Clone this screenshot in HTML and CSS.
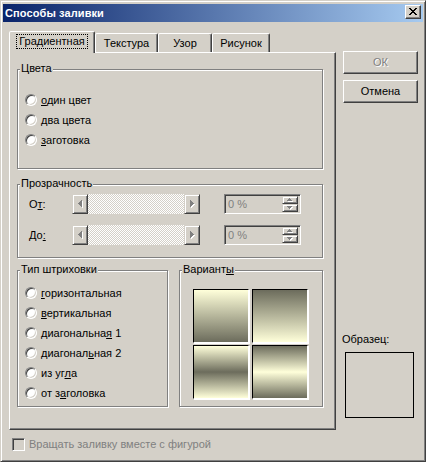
FILE: index.html
```html
<!DOCTYPE html>
<html lang="ru">
<head>
<meta charset="utf-8">
<title>Способы заливки</title>
<link rel="stylesheet" href="styles.css">
</head>
<body>
<div class="window">
  <div class="titlebar">
    <span class="title">Способы заливки</span>
    <span class="close-btn">
      <svg class="close-x" width="8" height="7" viewBox="0 0 8 7" shape-rendering="crispEdges">
        <rect x="0" y="0" width="2" height="1"/><rect x="6" y="0" width="2" height="1"/>
        <rect x="1" y="1" width="2" height="1"/><rect x="5" y="1" width="2" height="1"/>
        <rect x="2" y="2" width="4" height="1"/>
        <rect x="3" y="3" width="2" height="1"/>
        <rect x="2" y="4" width="4" height="1"/>
        <rect x="1" y="5" width="2" height="1"/><rect x="5" y="5" width="2" height="1"/>
        <rect x="0" y="6" width="2" height="1"/><rect x="6" y="6" width="2" height="1"/>
      </svg>
    </span>
  </div>

  <div class="content">
    <div class="leftcol">
      <div class="tabs">
        <div class="tab tab-active tab-grad"><span class="focus">Градиентная</span></div>
        <div class="tab tab-tex">Текстура</div>
        <div class="tab tab-pat">Узор</div>
        <div class="tab tab-pic">Рисунок</div>
      </div>

      <div class="panel">
        <div class="group group-colors">
          <span class="legend">Цвета</span>
          <div class="radio-row"><span class="radio"></span><span><u>о</u>дин цвет</span></div>
          <div class="radio-row"><span class="radio"></span><span><u>д</u>ва цвета</span></div>
          <div class="radio-row"><span class="radio"></span><span><u>з</u>аготовка</span></div>
        </div>

        <div class="group group-transp">
          <span class="legend">Прозрачность</span>
          <div class="slider-row">
            <span class="slider-label">О<u>т</u>:</span>
            <div class="scrollbar">
              <span class="sb-btn">
                <svg width="5" height="8" viewBox="0 0 5 8" shape-rendering="crispEdges">
                  <path class="arr-shadow" d="M1 4h1v-1h1v-1h1v-1h1v7h-1v-1h-1v-1h-1v-1h-1z"/>
                  <path class="arr" d="M0 3h1v-1h1v-1h1v-1h1v7h-1v-1h-1v-1h-1v-1h-1z"/>
                </svg>
              </span>
              <span class="sb-track"></span>
              <span class="sb-btn">
                <svg width="5" height="8" viewBox="0 0 5 8" shape-rendering="crispEdges">
                  <path class="arr-shadow" d="M1 1h1v1h1v1h1v1h1v1h-1v1h-1v1h-1v1h-1z"/>
                  <path class="arr" d="M0 0h1v1h1v1h1v1h1v1h-1v1h-1v1h-1v1h-1z"/>
                </svg>
              </span>
            </div>
            <div class="spin">
              <span class="spin-text">0 %</span>
              <div class="spin-btns">
                <span class="spin-btn">
                  <svg width="6" height="4" viewBox="0 0 6 4" shape-rendering="crispEdges">
                    <path class="arr-shadow" d="M3 1h1v1h1v1h1v1h-5v-1h1v-1h1z"/>
                    <path class="arr" d="M2 0h1v1h1v1h1v1h-5v-1h1v-1h1z"/>
                  </svg>
                </span>
                <span class="spin-btn">
                  <svg width="6" height="4" viewBox="0 0 6 4" shape-rendering="crispEdges">
                    <path class="arr-shadow" d="M1 1h5v1h-1v1h-1v1h-1v-1h-1v-1h-1z"/>
                    <path class="arr" d="M0 0h5v1h-1v1h-1v1h-1v-1h-1v-1h-1z"/>
                  </svg>
                </span>
              </div>
            </div>
          </div>
          <div class="slider-row slider-row-2">
            <span class="slider-label">До<u>:</u></span>
            <div class="scrollbar">
              <span class="sb-btn">
                <svg width="5" height="8" viewBox="0 0 5 8" shape-rendering="crispEdges">
                  <path class="arr-shadow" d="M1 4h1v-1h1v-1h1v-1h1v7h-1v-1h-1v-1h-1v-1h-1z"/>
                  <path class="arr" d="M0 3h1v-1h1v-1h1v-1h1v7h-1v-1h-1v-1h-1v-1h-1z"/>
                </svg>
              </span>
              <span class="sb-track"></span>
              <span class="sb-btn">
                <svg width="5" height="8" viewBox="0 0 5 8" shape-rendering="crispEdges">
                  <path class="arr-shadow" d="M1 1h1v1h1v1h1v1h1v1h-1v1h-1v1h-1v1h-1z"/>
                  <path class="arr" d="M0 0h1v1h1v1h1v1h1v1h-1v1h-1v1h-1v1h-1z"/>
                </svg>
              </span>
            </div>
            <div class="spin">
              <span class="spin-text">0 %</span>
              <div class="spin-btns">
                <span class="spin-btn">
                  <svg width="6" height="4" viewBox="0 0 6 4" shape-rendering="crispEdges">
                    <path class="arr-shadow" d="M3 1h1v1h1v1h1v1h-5v-1h1v-1h1z"/>
                    <path class="arr" d="M2 0h1v1h1v1h1v1h-5v-1h1v-1h1z"/>
                  </svg>
                </span>
                <span class="spin-btn">
                  <svg width="6" height="4" viewBox="0 0 6 4" shape-rendering="crispEdges">
                    <path class="arr-shadow" d="M1 1h5v1h-1v1h-1v1h-1v-1h-1v-1h-1z"/>
                    <path class="arr" d="M0 0h5v1h-1v1h-1v1h-1v-1h-1v-1h-1z"/>
                  </svg>
                </span>
              </div>
            </div>
          </div>
        </div>

        <div class="bottom-groups">
          <div class="group group-hatch">
            <span class="legend">Тип штриховки</span>
            <div class="radio-row"><span class="radio"></span><span><u>г</u>оризонтальная</span></div>
            <div class="radio-row"><span class="radio"></span><span><u>в</u>ертикальная</span></div>
            <div class="radio-row"><span class="radio"></span><span>диагональна<u>я</u> 1</span></div>
            <div class="radio-row"><span class="radio"></span><span>диагонал<u>ь</u>ная 2</span></div>
            <div class="radio-row"><span class="radio"></span><span>из уг<u>л</u>а</span></div>
            <div class="radio-row"><span class="radio"></span><span>от з<u>а</u>головка</span></div>
          </div>
          <div class="group group-variants">
            <span class="legend">Вариант<u>ы</u></span>
            <div class="swatches">
              <span class="swatch sw-down"></span>
              <span class="swatch sw-up"></span>
              <span class="swatch sw-mid-dark"></span>
              <span class="swatch sw-mid-light"></span>
            </div>
          </div>
        </div>
      </div>

      <div class="check-row">
        <span class="checkbox"></span>
        <span class="check-label">Вращать заливку вместе с фигурой</span>
      </div>
    </div>

    <div class="rightcol">
      <div class="btn btn-ok btn-disabled">ОК</div>
      <div class="btn">Отмена</div>
      <div class="sample-label">Образец:</div>
      <div class="sample-box"></div>
    </div>
  </div>
</div>
</body>
</html>
```

FILE: styles.css
```css
html, body {
  margin: 0;
  padding: 0;
  background: #D4D0C8;
}

body {
  font-family: "Liberation Sans", Arial, sans-serif;
  font-size: 11px;
  line-height: 13px;
  color: #000;
}

u {
  text-decoration: underline;
  text-underline-offset: 1px;
}

.window {
  box-sizing: border-box;
  width: 426px;
  height: 462px;
  background: #D4D0C8;
  border: 1px solid;
  border-color: #D4D0C8 #404040 #404040 #D4D0C8;
  box-shadow: inset 1px 1px 0 #fff, inset -1px -1px 0 #808080;
  padding: 3px 2px 2px 2px;
  display: flex;
  flex-direction: column;
}

/* ---------- title bar ---------- */
.titlebar {
  height: 18px;
  flex: none;
  background: linear-gradient(to right, #0A246A, #A6CAF0);
  display: flex;
  align-items: center;
  justify-content: space-between;
  padding: 0 2px 0 2px;
}

.title {
  color: #fff;
  font-weight: bold;
  font-size: 11px;
  letter-spacing: 0.1px;
}

.close-btn {
  align-self: flex-start;
  margin-top: 1px;
  box-sizing: border-box;
  width: 16px;
  height: 14px;
  background: #D4D0C8;
  border: 1px solid;
  border-color: #fff #404040 #404040 #fff;
  box-shadow: inset -1px -1px 0 #808080;
  display: flex;
  align-items: center;
  justify-content: center;
  padding: 0 1px 1px 0;
}

.close-x {
  display: block;
  fill: #000;
}

/* ---------- content ---------- */
.content {
  display: flex;
  padding: 9px 0 0 6px;
}

.leftcol {
  width: 327px;
  display: flex;
  flex-direction: column;
}

/* tabs */
.tabs {
  display: flex;
  align-items: flex-end;
  height: 21px;
}

.tab {
  box-sizing: border-box;
  height: 19px;
  border: 1px solid;
  border-bottom: none;
  border-color: #fff #404040 transparent #fff;
  border-radius: 2px 2px 0 0;
  box-shadow: inset -1px 0 0 #808080;
  background: #D4D0C8;
  display: flex;
  align-items: center;
  justify-content: center;
  padding-top: 1px;
}

.tab-active {
  position: relative;
  z-index: 1;
  height: 22px;
  margin-bottom: -1px;
  padding-top: 0;
  padding-bottom: 2px;
}

.tab-grad { width: 86px; }
.tab-tex { width: 63px; }
.tab-pat { width: 54px; }
.tab-pic { width: 58px; }

.focus {
  outline: 1px dotted #000;
  outline-offset: 0;
  padding: 0 2px;
}

/* panel */
.panel {
  box-sizing: border-box;
  width: 327px;
  height: 378px;
  border: 1px solid;
  border-color: #fff #404040 #404040 #fff;
  box-shadow: inset -1px -1px 0 #808080;
  padding: 16px 0 0 7px;
}

.group {
  position: relative;
  box-sizing: border-box;
  border: 1px solid #808080;
  box-shadow: 1px 1px 0 #fff, inset 1px 1px 0 #fff;
}

.legend {
  position: absolute;
  top: -8px;
  left: 2px;
  padding: 0 1px;
  background: #D4D0C8;
  line-height: 13px;
  white-space: nowrap;
}

.group-colors {
  width: 306px;
  height: 100px;
  padding: 20px 0 0 7px;
}

.group-transp {
  width: 306px;
  height: 74px;
  margin-top: 15px;
  padding: 9px 0 0 11px;
}

.bottom-groups {
  display: flex;
  gap: 11px;
  margin-top: 12px;
}

.group-hatch {
  width: 151px;
  height: 137px;
  padding: 12px 0 0 7px;
}

.group-variants {
  width: 144px;
  height: 137px;
  padding: 18px 0 0 13px;
}

/* radio rows */
.radio-row {
  display: flex;
  align-items: center;
  height: 20px;
  gap: 4px;
  white-space: nowrap;
}

.radio {
  box-sizing: border-box;
  flex: none;
  width: 12px;
  height: 12px;
  border-radius: 50%;
  background: #fff;
  border: 1px solid;
  border-color: #808080 #fff #fff #808080;
  box-shadow: inset 1px 1px 0 #404040, inset -1px -1px 0 #D4D0C8;
}

/* sliders */
.slider-row {
  display: flex;
  align-items: center;
  height: 20px;
}

.slider-row-2 {
  margin-top: 11px;
}

.slider-label {
  width: 43px;
  flex: none;
}

.scrollbar {
  display: flex;
  width: 128px;
  height: 20px;
  flex: none;
}

.sb-btn {
  box-sizing: border-box;
  width: 16px;
  height: 20px;
  flex: none;
  background: #D4D0C8;
  border: 1px solid;
  border-color: #D4D0C8 #404040 #404040 #D4D0C8;
  box-shadow: inset 1px 1px 0 #fff, inset -1px -1px 0 #808080;
  display: flex;
  align-items: center;
  justify-content: center;
}

.sb-btn svg {
  display: block;
}

.arr { fill: #808080; }
.arr-shadow { fill: #fff; }

.sb-track {
  flex: 1;
  background: repeating-conic-gradient(#fff 0 25%, #D4D0C8 0 50%) 0 0 / 2px 2px;
}

.spin {
  box-sizing: border-box;
  margin-left: 24px;
  width: 77px;
  height: 20px;
  flex: none;
  border: 1px solid;
  border-color: #808080 #fff #fff #808080;
  box-shadow: inset 1px 1px 0 #404040, inset -1px -1px 0 #D4D0C8;
  background: #D4D0C8;
  display: flex;
  align-items: center;
  padding: 2px 2px 2px 2px;
}

.spin-text {
  flex: 1;
  color: #808080;
  padding-left: 1px;
}

.spin-btns {
  display: flex;
  flex-direction: column;
  width: 16px;
  height: 16px;
}

.spin-btn {
  box-sizing: border-box;
  flex: 1;
  background: #D4D0C8;
  border: 1px solid;
  border-color: #D4D0C8 #404040 #404040 #D4D0C8;
  box-shadow: inset 1px 1px 0 #fff, inset -1px -1px 0 #808080;
  display: flex;
  align-items: center;
  justify-content: center;
}

.spin-btn svg {
  display: block;
}

/* swatches */
.swatches {
  display: grid;
  grid-template-columns: 56px 56px;
  grid-template-rows: 54px 54px;
  gap: 2px 3px;
}

.swatch {
  box-sizing: border-box;
  border: 1px solid;
  border-color: #000 #fff #fff #000;
  box-shadow: 1px 1px 0 #fff;
}

.sw-down { background: linear-gradient(#FFFFDA, #6C6C5C); }
.sw-up { background: linear-gradient(#6C6C5C, #FFFFDA); }
.sw-mid-dark { background: linear-gradient(#FFFFDA, #6C6C5C 50%, #FFFFDA); }
.sw-mid-light { background: linear-gradient(#6C6C5C, #FFFFDA 50%, #6C6C5C); }

/* checkbox row */
.check-row {
  display: flex;
  align-items: center;
  gap: 4px;
  margin-top: 8px;
  margin-left: 3px;
  height: 13px;
}

.checkbox {
  box-sizing: border-box;
  width: 13px;
  height: 13px;
  flex: none;
  background: #D4D0C8;
  border: 1px solid;
  border-color: #808080 #fff #fff #808080;
  box-shadow: inset 1px 1px 0 #404040, inset -1px -1px 0 #D4D0C8;
}

.check-label {
  color: #808080;
}

/* right column */
.rightcol {
  margin-left: 7px;
  padding-top: 20px;
  width: 75px;
  display: flex;
  flex-direction: column;
}

.btn {
  box-sizing: border-box;
  width: 75px;
  height: 23px;
  background: #D4D0C8;
  border: 1px solid;
  border-color: #fff #404040 #404040 #fff;
  box-shadow: inset -1px -1px 0 #808080;
  display: flex;
  align-items: center;
  justify-content: center;
  padding-bottom: 1px;
}

.btn-ok {
  margin-bottom: 6px;
}

.btn-disabled {
  color: #808080;
  text-shadow: 1px 1px 0 #fff;
}

.sample-label {
  margin-top: 230px;
  margin-left: -1px;
}

.sample-box {
  box-sizing: border-box;
  margin-top: 6px;
  margin-left: 2px;
  width: 69px;
  height: 66px;
  border: 1px solid #000;
}
```
